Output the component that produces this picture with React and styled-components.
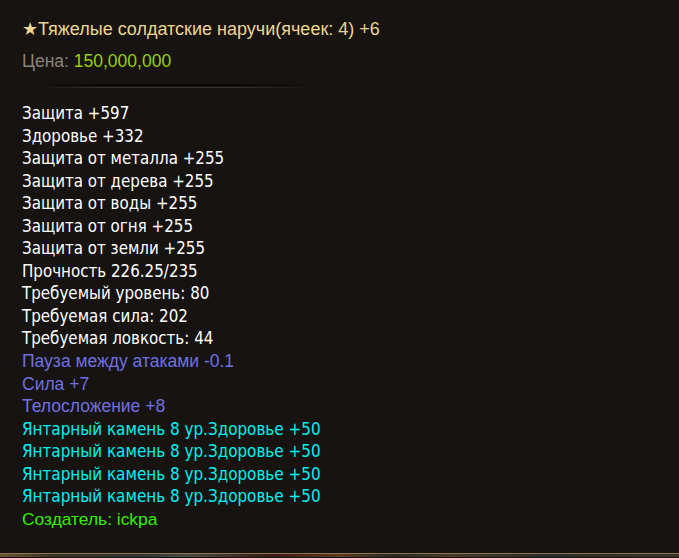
import React from 'react';
import styled, { createGlobalStyle } from 'styled-components';

const stats = [
  { text: 'Защита +597', kind: 'base' },
  { text: 'Здоровье +332', kind: 'base' },
  { text: 'Защита от металла +255', kind: 'base' },
  { text: 'Защита от дерева +255', kind: 'base' },
  { text: 'Защита от воды +255', kind: 'base' },
  { text: 'Защита от огня +255', kind: 'base' },
  { text: 'Защита от земли +255', kind: 'base' },
  { text: 'Прочность 226.25/235', kind: 'base' },
  { text: 'Требуемый уровень: 80', kind: 'base' },
  { text: 'Требуемая сила: 202', kind: 'base' },
  { text: 'Требуемая ловкость: 44', kind: 'base' },
  { text: 'Пауза между атаками -0.1', kind: 'bonus' },
  { text: 'Сила +7', kind: 'bonus' },
  { text: 'Телосложение +8', kind: 'bonus' },
  { text: 'Янтарный камень 8 ур.Здоровье +50', kind: 'gem' },
  { text: 'Янтарный камень 8 ур.Здоровье +50', kind: 'gem' },
  { text: 'Янтарный камень 8 ур.Здоровье +50', kind: 'gem' },
  { text: 'Янтарный камень 8 ур.Здоровье +50', kind: 'gem' },
  { text: 'Создатель: ickpa', kind: 'maker' },
];

const TAHOMA = '"DejaVu Sans Condensed", "DejaVu Sans", sans-serif';
const ARIAL = '"Liberation Sans", Arial, sans-serif';

const styles = {
  base: { color: '#ffffff', font: TAHOMA, size: 16.8 },
  bonus: { color: '#7070e0', font: ARIAL, size: 17.5 },
  gem: { color: '#00f0f0', font: TAHOMA, size: 16.9 },
  maker: { color: '#33ee00', font: ARIAL, size: 17.4 },
};

export default function App() {
  return (
    <>
      <GlobalStyle />
      <Tooltip>
        <Title>★Тяжелые солдатские наручи(ячеек: 4) +6</Title>
        <Price>
          Цена: <PriceValue>150,000,000</PriceValue>
        </Price>
        <Divider />
        <StatList>
          {stats.map((s, i) => {
            const st = styles[s.kind];
            return (
              <Stat key={i} $color={st.color} $font={st.font} $size={st.size}>
                {s.text}
              </Stat>
            );
          })}
        </StatList>
      </Tooltip>
      <SceneStrip />
    </>
  );
}

const GlobalStyle = createGlobalStyle`
  html, body {
    margin: 0;
    padding: 0;
    background: #161310;
  }
`;

const Tooltip = styled.div`
  display: flex;
  flex-direction: column;
  height: 554px;
  box-sizing: border-box;
  padding: 19px 0 0 22px;
  background: #161310;
  border-bottom: 1px solid #8a744c;
  font-family: "Liberation Sans", Arial, sans-serif;
`;

const Title = styled.div`
  font-size: 18px;
  line-height: 21px;
  color: #ecd692;
`;

const Price = styled.div`
  margin-top: 11px;
  font-size: 17.5px;
  line-height: 20px;
  color: #8b847b;
`;

const PriceValue = styled.span`
  color: #9acd0c;
`;

const Divider = styled.div`
  width: 272px;
  height: 4px;
  margin: 13px 0 0 18px;
  background:
    linear-gradient(90deg, rgba(22,19,16,1) 0%, rgba(22,19,16,0) 22%, rgba(22,19,16,0) 72%, rgba(22,19,16,1) 100%),
    linear-gradient(180deg, #05090b 0 2px, #161310 2px 3px, #38342f 3px 4px);
`;

const StatList = styled.div`
  display: flex;
  flex-direction: column;
  margin-top: 14px;
`;

const Stat = styled.div`
  font-family: ${p => p.$font};
  font-size: ${p => p.$size}px;
  line-height: 22.55px;
  white-space: nowrap;
  color: ${p => p.$color};
`;

const SceneStrip = styled.div`
  height: 3px;
  background: linear-gradient(90deg, #6b5438 0%, #3a3024 8%, #2c3432 20%, #4a4a44 28%, #3a1a14 40%, #5a3a20 50%, #2a2a26 58%, #4a3a28 66%, #2a2c2a 80%, #3a3428 100%);
`;
